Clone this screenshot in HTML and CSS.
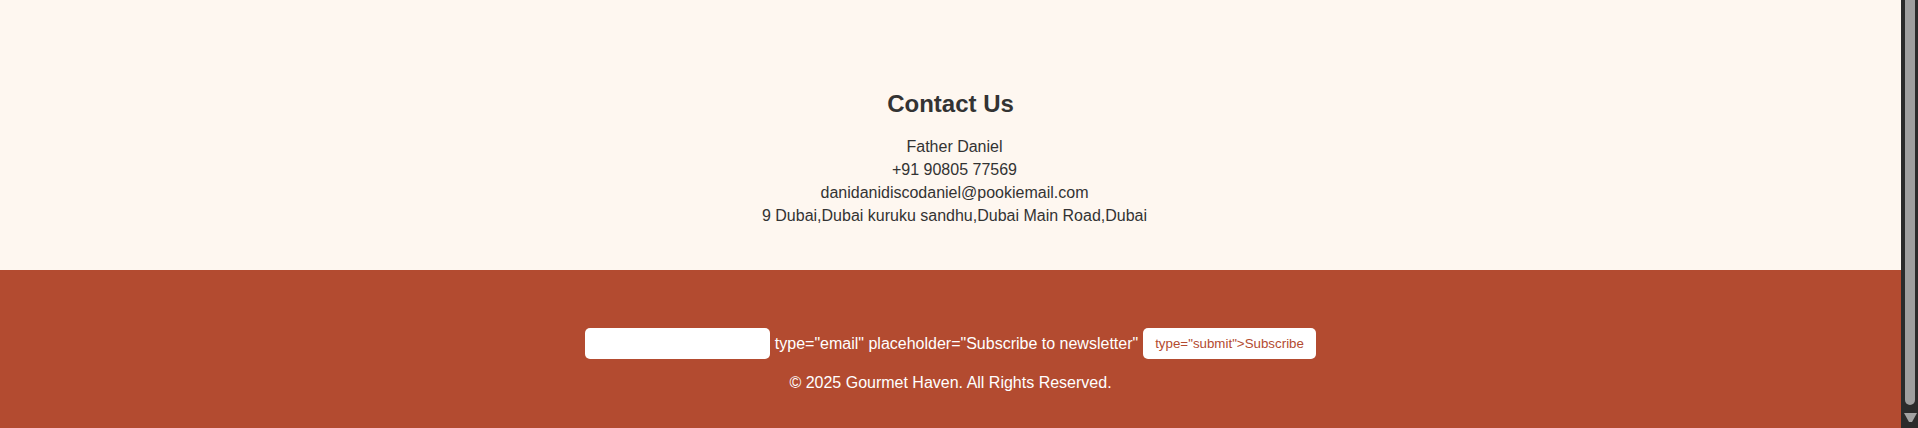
FILE: index.html
```html
<!DOCTYPE html>
<html lang="en">
<head>
<meta charset="utf-8">
<title>Gourmet Haven</title>
<link rel="stylesheet" href="styles.css">
</head>
<body>
<div class="window">
  <main class="page">
    <section class="contact">
      <h2 class="contact-title">Contact Us</h2>
      <p class="contact-lines">Father Daniel<br>+91 90805 77569<br>danidanidiscodaniel@pookiemail.com<br>9 Dubai,Dubai kuruku sandhu,Dubai Main Road,Dubai</p>
    </section>
    <footer class="footer">
      <form class="newsletter">
        <input class="email-input" aria-label="email">
        <span class="stray">type="email" placeholder="Subscribe to newsletter"</span>
        <button class="subscribe" type="button">type="submit"&gt;Subscribe</button>
      </form>
      <p class="copyright">© 2025 Gourmet Haven. All Rights Reserved.</p>
    </footer>
  </main>
  <div class="scrollbar">
    <div class="thumb"></div>
    <svg class="arrow" width="13" height="11" viewBox="0 0 13 11"><polygon points="0,1 13,1 8,10 5,10" fill="#a3a3a3"/></svg>
  </div>
</div>
</body>
</html>
```

FILE: styles.css
```css
html, body {
  margin: 0;
  padding: 0;
  height: 428px;
  overflow: hidden;
}

body {
  font-family: "Liberation Sans", Arial, sans-serif;
  font-size: 16px;
}

.window {
  display: flex;
  width: 1918px;
  height: 428px;
}

.page {
  flex: 1;
  display: flex;
  flex-direction: column;
}

.contact {
  background: #fef7f0;
  color: #333333;
  text-align: center;
  padding: 90px 0 43px;
}

.contact-title {
  margin: 0 0 17px;
  font-size: 24px;
  line-height: 28px;
  font-weight: bold;
}

.contact-lines {
  margin: 0;
  padding-left: 8px;
  line-height: 23px;
}

.footer {
  flex: 1;
  background: #b34b30;
  color: #ffffff;
  text-align: center;
  padding-top: 58px;
}

.newsletter {
  display: flex;
  justify-content: center;
  align-items: center;
  gap: 5px;
  margin: 0;
}

.email-input {
  width: 185px;
  height: 31px;
  box-sizing: border-box;
  border: none;
  border-radius: 5px;
  background: #ffffff;
  padding: 0 8px;
  margin: 0;
}

.stray {
  line-height: 18px;
}

.subscribe {
  height: 31px;
  width: 173px;
  box-sizing: border-box;
  border: none;
  border-radius: 5px;
  background: #ffffff;
  color: #b34b30;
  font-family: "Liberation Sans", Arial, sans-serif;
  font-size: 13.333px;
  padding: 0 12px;
  margin: 0;
  text-align: left;
}

.copyright {
  margin: 15px 0 0;
}

.scrollbar {
  width: 17px;
  background: #2b2b2b;
  display: flex;
  flex-direction: column;
  align-items: center;
}

.thumb {
  width: 10px;
  height: 405px;
  margin-left: 1px;
  background: #9f9f9f;
  border-radius: 0 0 5px 5px;
}

.arrow {
  margin-top: 7px;
  margin-left: 1px;
  display: block;
}
```
